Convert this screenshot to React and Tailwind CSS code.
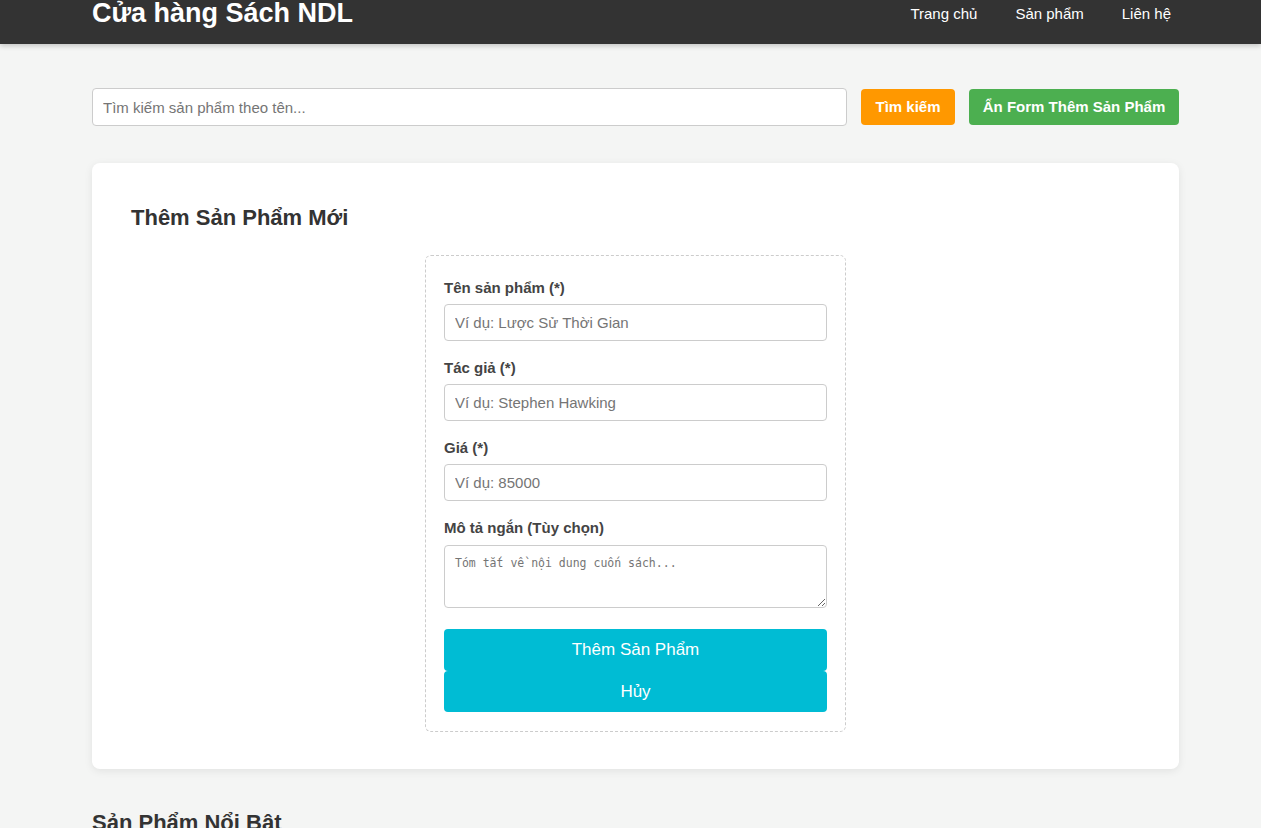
export default function App() {
  const font = { fontFamily: '"Liberation Sans", Arial, sans-serif' };
  return (
    <div className="min-h-[828px] bg-[#f4f5f4] text-[#333]" style={font}>
      <header className="h-[44px] bg-[#333] shadow-[0_2px_5px_rgba(0,0,0,0.2)]">
        <div className="ml-[92px] w-[1087px] flex items-start justify-between">
          <h1 className="text-[27px] font-bold leading-none text-white">Cửa hàng Sách NDL</h1>
          <nav className="flex gap-[38px] pt-[6px] pr-[8px] text-[15px] leading-none text-white">
            <a>Trang chủ</a>
            <a>Sản phẩm</a>
            <a>Liên hệ</a>
          </nav>
        </div>
      </header>

      <main className="ml-[92px] w-[1087px]">
        <div className="mt-[44px] flex items-center gap-[14px]">
          <input
            className="h-[38px] flex-1 rounded-[4px] border border-[#ccc] bg-white px-[10px] text-[15px] outline-none placeholder:text-[#757575]"
            placeholder="Tìm kiếm sản phẩm theo tên..."
            style={font}
          />
          <button className="h-[36px] w-[94px] rounded-[4px] bg-[#ff9800] text-[15px] font-bold text-white">Tìm kiếm</button>
          <button className="h-[36px] w-[210px] rounded-[4px] bg-[#4caf50] text-[15px] font-bold text-white">Ẩn Form Thêm Sản Phẩm</button>
        </div>

        <section className="mt-[37px] rounded-[8px] bg-white px-[39px] pt-[44px] pb-[37px] shadow-[0_2px_8px_rgba(0,0,0,0.08)]">
          <h2 className="text-[22px] font-bold leading-none text-[#333]">Thêm Sản Phẩm Mới</h2>
          <div className="mx-auto mt-[26px] w-[421px] rounded-[6px] border border-dashed border-[#ccc] px-[18px] pt-[23px] pb-[19px]">
            {[
              ['Tên sản phẩm (*)', 'Ví dụ: Lược Sử Thời Gian'],
              ['Tác giả (*)', 'Ví dụ: Stephen Hawking'],
              ['Giá (*)', 'Ví dụ: 85000'],
            ].map(([l, p]) => (
              <div key={l} className="mb-[18px]">
                <label className="mb-[8px] block text-[15px] font-bold leading-[17px] text-[#444]">{l}</label>
                <input
                  className="h-[37px] w-full rounded-[4px] border border-[#ccc] px-[10px] text-[15px] outline-none placeholder:text-[#757575]"
                  placeholder={p}
                  style={font}
                />
              </div>
            ))}
            <div>
              <label className="mb-[9px] block text-[15px] font-bold leading-[17px] text-[#444]">Mô tả ngắn (Tùy chọn)</label>
              <textarea
                className="block h-[63px] w-full rounded-[4px] border border-[#ccc] px-[10px] py-[9px] text-[11.5px] outline-none placeholder:text-[#757575]"
                placeholder="Tóm tắt về nội dung cuốn sách..."
                style={{ fontFamily: '"DejaVu Sans Mono", monospace' }}
              />
            </div>
            <button className="mt-[21px] block h-[42px] w-full rounded-[4px] bg-[#00bcd4] text-[17px] text-white">Thêm Sản Phẩm</button>
            <button className="block h-[41px] w-full rounded-[4px] bg-[#00bcd4] text-[17px] text-white">Hủy</button>
          </div>
        </section>

        <h2 className="mt-[43px] text-[22px] font-bold leading-none text-[#333]">Sản Phẩm Nổi Bật</h2>
      </main>
    </div>
  );
}
